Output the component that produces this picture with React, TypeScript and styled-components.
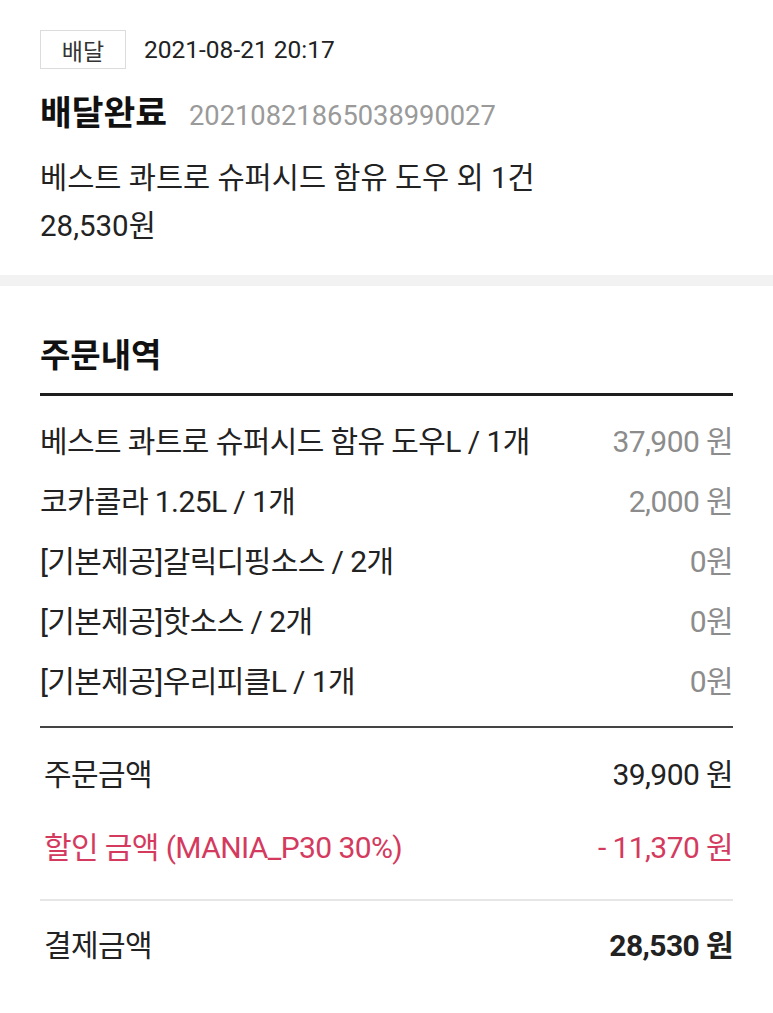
import React from "react";
import styled, { createGlobalStyle } from "styled-components";

const Global = createGlobalStyle`
  html, body { margin: 0; padding: 0; background: #fff; }
  body {
    font-family: Roboto, "Noto Sans CJK KR", "Noto Sans", sans-serif;
    color: #222;
    -webkit-font-smoothing: antialiased;
  }
`;

const Page = styled.div`
  width: 773px;
  background: #fff;
`;

const Header = styled.section`
  padding: 30px 40px 25px;
  display: flex;
  flex-direction: column;
`;

const MetaRow = styled.div`
  display: flex;
  align-items: center;
  gap: 18px;
`;

const Tag = styled.span`
  box-sizing: border-box;
  width: 86px;
  height: 39px;
  border: 1px solid #dcdcdc;
  display: flex;
  align-items: center;
  justify-content: center;
  font-size: 23px;
  color: #333;
`;

const DateText = styled.span`
  font-size: 24.5px;
  color: #222;
`;

const StatusRow = styled.div`
  display: flex;
  align-items: baseline;
  gap: 22px;
  margin-top: 24px;
  line-height: 40px;
`;

const Status = styled.h1`
  margin: 0;
  font-size: 34.5px;
  font-weight: 700;
  color: #111;
`;

const OrderNo = styled.span`
  font-size: 27.3px;
  color: #9a9a9a;
`;

const InfoLine = styled.div<{ $first?: boolean }>`
  font-size: 29.5px;
  line-height: 48px;
  margin-top: ${(p) => (p.$first ? "18px" : "0")};
  color: #222;
`;

const Band = styled.div`
  height: 11px;
  background: #f2f2f2;
`;

const OrderSection = styled.section`
  padding: 50px 40px 40px;
`;

const Title = styled.h2`
  margin: 0;
  font-size: 33px;
  font-weight: 700;
  line-height: 40px;
  color: #111;
`;

const Rule = styled.div<{ $weight: number; $color: string }>`
  height: ${(p) => p.$weight}px;
  background: ${(p) => p.$color};
`;

const TitleGap = styled.div`
  height: 17px;
`;

const ItemList = styled.div`
  display: flex;
  flex-direction: column;
  margin: 13px 0 17px;
`;

const Row = styled.div<{ $indent?: number }>`
  display: flex;
  align-items: center;
  justify-content: space-between;
  height: 60px;
  padding-left: ${(p) => p.$indent ?? 0}px;
  font-size: 30px;
  letter-spacing: -0.6px;
`;

const Name = styled.span<{ $color?: string }>`
  color: ${(p) => p.$color ?? "#222"};
`;

const Price = styled.span<{ $color?: string; $bold?: boolean }>`
  color: ${(p) => p.$color ?? "#222"};
  font-weight: ${(p) => (p.$bold ? 700 : 400)};
`;

const Summary = styled.div<{ $top: number; $bottom: number }>`
  display: flex;
  flex-direction: column;
  gap: 13px;
  margin: ${(p) => p.$top}px 0 ${(p) => p.$bottom}px;
`;

const items = [
  { name: "베스트 콰트로 슈퍼시드 함유 도우L / 1개", price: "37,900 원" },
  { name: "코카콜라 1.25L / 1개", price: "2,000 원" },
  { name: "[기본제공]갈릭디핑소스 / 2개", price: "0원" },
  { name: "[기본제공]핫소스 / 2개", price: "0원" },
  { name: "[기본제공]우리피클L / 1개", price: "0원" },
];

const RED = "#d43a5e";

export default function App() {
  return (
    <Page>
      <Global />
      <Header>
        <MetaRow>
          <Tag>배달</Tag>
          <DateText>2021-08-21 20:17</DateText>
        </MetaRow>
        <StatusRow>
          <Status>배달완료</Status>
          <OrderNo>20210821865038990027</OrderNo>
        </StatusRow>
        <InfoLine $first>베스트 콰트로 슈퍼시드 함유 도우 외 1건</InfoLine>
        <InfoLine>28,530원</InfoLine>
      </Header>
      <Band />
      <OrderSection>
        <Title>주문내역</Title>
        <TitleGap />
        <Rule $weight={3} $color="#1e1e1e" />
        <ItemList>
          {items.map((it) => (
            <Row key={it.name}>
              <Name>{it.name}</Name>
              <Price $color="#8c8c8c">{it.price}</Price>
            </Row>
          ))}
        </ItemList>
        <Rule $weight={2} $color="#444" />
        <Summary $top={14} $bottom={24}>
          <Row $indent={4}>
            <Name>주문금액</Name>
            <Price>39,900 원</Price>
          </Row>
          <Row $indent={4}>
            <Name $color={RED}>할인 금액 (MANIA_P30 30%)</Name>
            <Price $color={RED}>- 11,370 원</Price>
          </Row>
        </Summary>
        <Rule $weight={2} $color="#e6e6e6" />
        <Summary $top={12} $bottom={0}>
          <Row $indent={4}>
            <Name>결제금액</Name>
            <Price $bold>28,530 원</Price>
          </Row>
        </Summary>
      </OrderSection>
    </Page>
  );
}
